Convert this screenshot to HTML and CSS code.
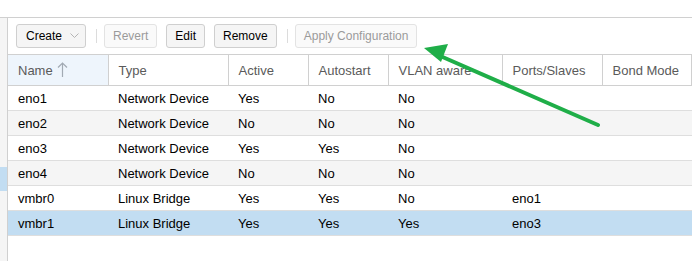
FILE: index.html
```html
<!DOCTYPE html>
<html lang="en">
<head>
    <meta charset="UTF-8">
    <title>Network</title>
    <link rel="stylesheet" href="styles.css">
</head>
<body>

    <div class="topbar"></div>

    <div class="main">
        <div class="side">
            <div class="side-sel"></div>
        </div>

        <div class="panel">
            <div class="toolbar">
                <button class="btn create">Create
                    <svg class="caret" width="9" height="6" viewBox="0 0 9 6"><polyline points="0.5,0.5 4.5,4.5 8.5,0.5" fill="none" stroke="#b4b4b4" stroke-width="1"/></svg>
                </button>
                <span class="sep"></span>
                <button class="btn disabled">Revert</button>
                <button class="btn">Edit</button>
                <button class="btn">Remove</button>
                <span class="sep"></span>
                <button class="btn disabled">Apply Configuration</button>
            </div>

            <table class="grid">
                <colgroup>
                    <col style="width:100px">
                    <col style="width:120px">
                    <col style="width:80px">
                    <col style="width:80px">
                    <col style="width:114px">
                    <col style="width:100px">
                    <col>
                </colgroup>
                <thead>
                    <tr>
                        <th class="sorted">Name
                            <svg class="sort" width="11" height="16" viewBox="0 0 11 16"><path d="M5.5 1 V15 M1 5.5 L5.5 1 L10 5.5" fill="none" stroke="#a2aab3" stroke-width="1.2"/></svg>
                        </th>
                        <th>Type</th>
                        <th>Active</th>
                        <th>Autostart</th>
                        <th>VLAN aware</th>
                        <th>Ports/Slaves</th>
                        <th>Bond Mode</th>
                    </tr>
                </thead>
                <tbody>
                    <tr><td>eno1</td><td>Network Device</td><td>Yes</td><td>No</td><td>No</td><td></td><td></td></tr>
                    <tr class="alt"><td>eno2</td><td>Network Device</td><td>No</td><td>No</td><td>No</td><td></td><td></td></tr>
                    <tr><td>eno3</td><td>Network Device</td><td>Yes</td><td>Yes</td><td>No</td><td></td><td></td></tr>
                    <tr class="alt"><td>eno4</td><td>Network Device</td><td>No</td><td>No</td><td>No</td><td></td><td></td></tr>
                    <tr><td>vmbr0</td><td>Linux Bridge</td><td>Yes</td><td>Yes</td><td>No</td><td>eno1</td><td></td></tr>
                    <tr class="selected"><td>vmbr1</td><td>Linux Bridge</td><td>Yes</td><td>Yes</td><td>Yes</td><td>eno3</td><td></td></tr>
                </tbody>
            </table>
        </div>
    </div>

    <!-- annotation arrow -->
    <svg class="arrow" width="692" height="261" viewBox="0 0 692 261">
        <line x1="598" y1="125" x2="438" y2="55" stroke="#1fae48" stroke-width="4" stroke-linecap="round"/>
        <polygon points="424,48 448,44 441,62" fill="#1fae48"/>
    </svg>

</body>
</html>
```

FILE: styles.css
```css
body {
    margin: 0;
    width: 692px;
    height: 261px;
    overflow: hidden;
    position: relative;
    background: white;
    font-family: "Liberation Sans", Arial, sans-serif;
    font-size: 13px;
    color: #000;
}

.topbar {
    height: 17px;
    border-bottom: 1px solid #d0d0d0;
}

.main {
    display: flex;
    height: 243px;
}

.side {
    width: 7px;
    background-color: #f5f5f5;
    border-right: 1px solid #d0d0d0;
}

.side-sel {
    margin-top: 149px;
    height: 24px;
    background-color: #c2ddf2;
}

.panel {
    flex: 1;
    min-width: 0;
}

.toolbar {
    height: 37px;
    padding-left: 8px;
    padding-bottom: 1px;
    display: flex;
    align-items: center;
    border-bottom: 1px solid #d0d0d0;
    box-sizing: border-box;
}

.btn {
    height: 24px;
    padding: 0 8px;
    margin-right: 9px;
    font-family: "Liberation Sans", Arial, sans-serif;
    font-size: 12px;
    color: #000;
    background-color: #f5f5f5;
    border: 1px solid #cfcfcf;
    border-radius: 3px;
    display: flex;
    align-items: center;
    box-sizing: border-box;
}

.btn.disabled {
    color: #9a9a9a;
    background-color: #fafafa;
    border-color: #e3e3e3;
}

.create {
    width: 70px;
    padding-left: 9px;
}

.caret {
    margin-left: 8px;
    margin-top: 1px;
    flex-shrink: 0;
}

.sep {
    width: 1px;
    height: 14px;
    background-color: #dcdcdc;
    margin: 0 7px 0 1px;
}

.grid {
    width: 100%;
    border-collapse: collapse;
    table-layout: fixed;
}

.grid th {
    height: 30px;
    padding: 0 10px;
    text-align: left;
    font-weight: normal;
    color: #5a5a5a;
    border-right: 1px solid #d0d0d0;
    border-bottom: 1px solid #d0d0d0;
    white-space: nowrap;
    overflow: hidden;
}

.grid th.sorted {
    background-color: #eef5fc;
}

.sort {
    vertical-align: -3px;
    margin-left: 1px;
}

.grid td {
    height: 24px;
    padding: 0 10px;
    border-bottom: 1px solid #dedede;
    white-space: nowrap;
}

.grid tr.alt td {
    background-color: #f5f5f5;
}

.grid tr.selected td {
    background-color: #c2ddf2;
}

.arrow {
    position: absolute;
    left: 0;
    top: 0;
}
```
